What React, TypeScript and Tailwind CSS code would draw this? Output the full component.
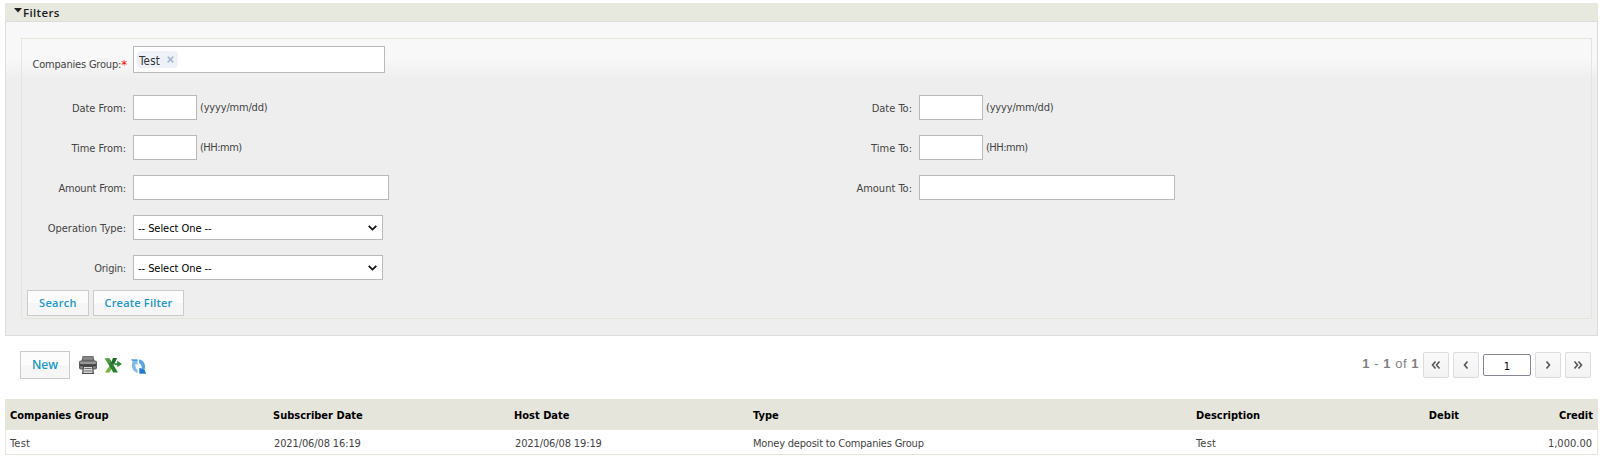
import React from "react";

const base = "font-['DejaVu_Sans_Condensed','DejaVu_Sans',sans-serif] [font-stretch:condensed]";

function Label({ children, className = "mt-[7px]" }: { children: React.ReactNode; className?: string }) {
  return (
    <div className={`flex shrink-0 justify-end whitespace-nowrap leading-[14px] ${className}`}>{children}</div>
  );
}

function Row({ children }: { children: React.ReactNode }) {
  return <div className="mb-[15px] flex h-[25px]">{children}</div>;
}

function Box({ className }: { className: string }) {
  return <input className={`ml-[7px] h-[25px] shrink-0 border border-[#b9b9b9] bg-white outline-none ${className}`} />;
}

function Select() {
  return (
    <div className="ml-[7px] flex h-[25px] w-[250px] items-center justify-between border border-[#b9b9b9] bg-white pr-[5px] pl-[4px] text-black">
      <span className="pt-[3px] tracking-[-0.05px]">-- Select One --</span>
      <svg width="9" height="6" viewBox="0 0 9 6" fill="none" stroke="#111" strokeWidth="1.8">
        <path d="M.7.8 4.5 4.6 8.3.8" />
      </svg>
    </div>
  );
}

function Button({ children, className }: { children: React.ReactNode; className: string }) {
  return (
    <button
      className={`flex items-center justify-center border border-[#cbcbcb] bg-[linear-gradient(#fcfcfc_50%,#f6f6f6_50%)] font-['Open_Sans',sans-serif] font-semibold whitespace-nowrap text-[#2196c8] [font-stretch:normal] ${className}`}
    >
      {children}
    </button>
  );
}

function PageButton({ d }: { d: string }) {
  return (
    <button className="flex size-[26px] items-center justify-center rounded-[2px] border border-[#dcdcdc] bg-[linear-gradient(#f9f9f9,#f3f3f3)]">
      <svg width="10" height="8" viewBox="0 0 10 8" fill="none" stroke="#555" strokeWidth="1.6" className="-mt-[1px]">
        <path d={d} />
      </svg>
    </button>
  );
}

function Printer() {
  return (
    <svg width="18" height="18" viewBox="0 0 18 18">
      <path d="M3.500 0h11l1 5h-13z" fill="#6f6f6f" />
      <path d="M4.500 1.200h9l.5 2.300H4z" fill="#8d8d8d" />
      <rect x="0" y="4.500" width="18" height="9" rx="2" fill="#5c5c5c" />
      <rect x="1" y="5.500" width="16" height="2.500" rx="1" fill="#969696" />
      <rect x="1" y="8.400" width="16" height="1.800" fill="#444" />
      <rect x="1" y="10.500" width="16" height="2" rx="1" fill="#888" />
      <path d="M4 10h10l1 8H3z" fill="#4a4a4a" />
      <path d="M5 11h8l.600 6H4.400z" fill="#d9d9d9" />
      <path d="M5.500 12.500h7M5.200 15h7.600" stroke="#6c6c6c" />
    </svg>
  );
}

function Excel() {
  return (
    <svg width="17" height="16" viewBox="0 0 17 16">
      <path d="M8 0h4L4.500 14.500H0L5 7z" fill="#6dba3a" />
      <path d="M0 .5h4.500L13 14.500H8.300z" fill="#2b8035" />
      <path d="M8 0h4L9 6.500 6.300 5z" fill="#1f6a2e" />
      <path d="M0 .5h4.500l1.800 3L3.500 6z" fill="#4c9f3c" />
      <path d="M9.500 5.200h2.700V2.800L17 6l-4.800 3.200V7H9.500z" fill="#2f8d3b" />
    </svg>
  );
}

function Refresh() {
  return (
    <svg width="15" height="15" viewBox="0 0 15 15">
      <path d="M0 .5h7v6L5 4.500C4.200 7 4.800 9.200 6.500 10.800v3C2-.5 13.300-.5 8.500 1.600 2.800z" fill="none" />
      <path d="M0 .5h6.500v5.700L4.700 4.600C4 7 4.600 9.300 6.500 11v3C2 12.800-.3 8 1.600 2.600z" fill="#7fbcea" />
      <path d="M8 .5c5 .8 7.300 5.500 5.500 10.300L15 14.500H8.500V8.800l1.800 1.600C11.200 8 10.300 5 8 3.700z" fill="#57a5e3" />
      <path d="M8.500 8.800v5.700H15l-1.600-3.600z" fill="#2179c9" />
      <path d="M0 .5h6.500v1.300H1.300z" fill="#4a97d8" />
    </svg>
  );
}

const columns = "grid-cols-[263px_241px_239px_443px_180px_83px_1fr]";

export default function App() {
  return (
    <div className={`h-[463px] w-[1604px] bg-white pt-[3px] pl-[5px] text-[11px] text-[#444] ${base}`}>
      <section className="w-[1593px]">
        <header className="flex h-[18px] items-center bg-[#e7e8de] pl-[9px] text-[#1c1c1c]">
          <svg width="8" height="5" viewBox="0 0 8 5" className="-mt-[3px]">
            <path d="M0 0h8L4 4.500z" fill="#222" />
          </svg>
          <span className="mt-[2px] ml-[1px] font-['Open_Sans',sans-serif] text-[11.5px] leading-[18px] font-semibold tracking-[0.35px] [font-stretch:normal]">
            Filters
          </span>
        </header>
        <div className="h-[315px] border border-[#dcdcdc] bg-[linear-gradient(#f8f8f8_37px,#eeeeee_58px)] pt-[16px] pl-[15px]">
          <div className="h-[281px] w-[1571px] border border-[#e5e5dc] pt-[7px]">
            <div className="mb-[22px] flex h-[27px]">
              <Label className="mt-[12px] w-[105px]">
                <span className="tracking-[-0.2px]">Companies Group:</span>
                <span className="text-[13px] text-[#f00]">*</span>
              </Label>
              <div className="ml-[6px] flex w-[252px] border border-[#b9b9b9] bg-white pt-[4px] pl-[3px]">
                <span className="flex h-[17px] w-[41px] items-center rounded-[4px] bg-[#eef2f8] pl-[2px] text-[11.5px] text-[#333]">
                  <span className="mt-[4px] w-[22px] tracking-[0.2px]">Test</span>
                  <svg width="7" height="7" viewBox="0 0 7 7" className="ml-[6px]" stroke="#a9b8d4" strokeWidth="1.7">
                    <path d="M.7.7 6.300 6.300M6.300.7.7 6.300" />
                  </svg>
                </span>
              </div>
            </div>
            <Row>
              <Label className="mt-[7px] w-[104px] tracking-[-0.05px]">Date From:</Label>
              <Box className="w-[64px]" />
              <span className="mt-[6px] ml-[3px] w-[600px] leading-[14px] tracking-[-0.18px]">(yyyy/mm/dd)</span>
              <Label className="mt-[7px] w-[112px]">Date To:</Label>
              <Box className="w-[64px]" />
              <span className="mt-[6px] ml-[3px] leading-[14px] tracking-[-0.18px]">(yyyy/mm/dd)</span>
            </Row>
            <Row>
              <Label className="mt-[7px] w-[104px] tracking-[-0.05px]">Time From:</Label>
              <Box className="w-[64px]" />
              <span className="mt-[6px] ml-[3px] w-[600px] leading-[14px] tracking-[-0.5px]">(HH:mm)</span>
              <Label className="mt-[7px] w-[112px]">Time To:</Label>
              <Box className="w-[64px]" />
              <span className="mt-[6px] ml-[3px] leading-[14px] tracking-[-0.5px]">(HH:mm)</span>
            </Row>
            <Row>
              <Label className="mt-[7px] w-[104px] tracking-[-0.18px]">Amount From:</Label>
              <Box className="w-[256px]" />
              <Label className="mt-[7px] w-[523px]">Amount To:</Label>
              <Box className="w-[256px]" />
            </Row>
            <Row>
              <Label className="mt-[7px] w-[104px]">Operation Type:</Label>
              <Select />
            </Row>
            <div className="flex h-[35px]">
              <Label className="mt-[7px] w-[104px] tracking-[-0.2px]">Origin:</Label>
              <Select />
            </div>
            <div className="flex gap-[4px] pl-[5px]">
              <Button className="h-[26px] w-[62px] text-[11px] tracking-[0.3px]">Search</Button>
              <Button className="h-[26px] w-[91px] text-[11px] tracking-[0.2px]">Create Filter</Button>
            </div>
          </div>
        </div>
      </section>
      <div className="flex h-[63px] w-[1586px] items-start justify-between pt-[15px] pl-[15px]">
        <div className="flex">
          <Button className="h-[28px] w-[50px] text-[12px]">New</Button>
          <div className="flex items-start gap-[8px] pt-[5px] pl-[9px]">
            <Printer />
            <div className="pt-[2px]">
              <Excel />
            </div>
            <div className="pt-[3px] pl-[1px]">
              <Refresh />
            </div>
          </div>
        </div>
        <div className="mt-[1px] flex items-center gap-[4px]">
          <span className="-mt-[3px] font-['Liberation_Sans',sans-serif] text-[13px] tracking-[0.53px] text-[#808080]">
            <b>1</b> - <b>1</b> of <b>1</b>
          </span>
          <PageButton d="M4.500.5 1.500 4l3 3.500M8.500.5 5.500 4l3 3.500" />
          <PageButton d="M6.500.5 3.500 4l3 3.500" />
          <input
            defaultValue="1"
            className="h-[22px] w-[48px] rounded-[2px] border border-[#858595] bg-white pt-[3px] text-center text-black outline-none"
          />
          <PageButton d="M3.500.5l3 3.500-3 3.500" />
          <PageButton d="M1.500.5l3 3.500-3 3.500M5.500.5l3 3.500-3 3.500" />
        </div>
      </div>
      <div className="w-[1593px]">
        <div className={`grid h-[31px] items-center bg-[#e5e5dc] px-[5px] pt-[3px] font-bold whitespace-nowrap text-black ${columns}`}>
          <span>Companies Group</span>
          <span>Subscriber Date</span>
          <span>Host Date</span>
          <span>Type</span>
          <span>Description</span>
          <span className="text-right">Debit</span>
          <span className="text-right">Credit</span>
        </div>
        <div className={`grid h-[25px] items-center border border-t-0 border-[#e5e5dc] pt-[4px] pr-[5px] pl-[4px] whitespace-nowrap ${columns}`}>
          <span className="tracking-[0.2px]">Test</span>
          <span className="pl-[1px] tracking-[-0.12px]">2021/06/08 16:19</span>
          <span className="pl-[1px] tracking-[-0.12px]">2021/06/08 19:19</span>
          <span className="tracking-[-0.2px]">Money deposit to Companies Group</span>
          <span className="tracking-[0.2px]">Test</span>
          <span />
          <span className="text-right">1,000.00</span>
        </div>
      </div>
    </div>
  );
}
